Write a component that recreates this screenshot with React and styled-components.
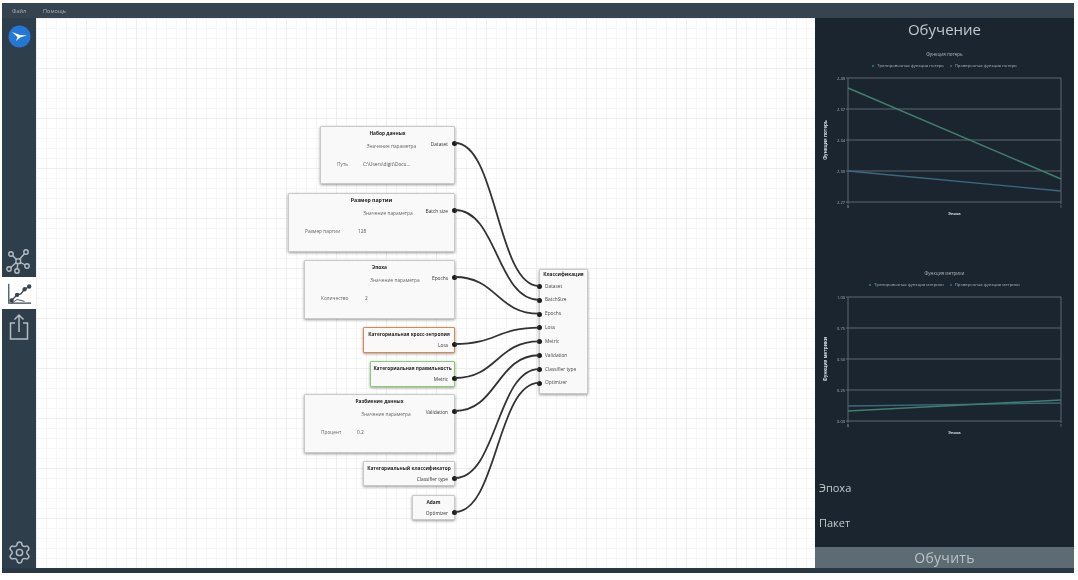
import styled, { createGlobalStyle } from "styled-components";
import { Settings } from "lucide-react";

const GlobalStyle = createGlobalStyle`
  html, body {
    margin: 0;
    padding: 0;
    background: #fff;
    overflow: hidden;
  }
  body {
    font-family: "Open Sans", "Liberation Sans", sans-serif;
  }
`;

const Page = styled.div`
  width: 1078px;
  height: 580px;
  padding: 3px 4px 7px 2px;
  box-sizing: border-box;
  filter: blur(0.6px);
`;

const Win = styled.div`
  height: 100%;
  display: flex;
  flex-direction: column;
  background: #2d3b47;
`;

const MenuBar = styled.div`
  height: 15px;
  flex: none;
  display: flex;
  align-items: center;
  gap: 17px;
  padding-left: 10px;
  background: #35444f;
  color: #a9b3ba;
  font-size: 5.5px;
`;

const Main = styled.div`
  flex: 1;
  min-height: 0;
  display: flex;
`;

const Sidebar = styled.div`
  width: 34px;
  flex: none;
  display: flex;
  flex-direction: column;
  align-items: stretch;
  background: #2f3e4b;
`;

const LogoWrap = styled.div`
  height: 36px;
  display: flex;
  justify-content: center;
  align-items: center;
`;

const NavGroup = styled.div`
  margin-top: 191px;
  display: flex;
  flex-direction: column;
`;

const NavItem = styled.div`
  height: ${(p) => p.$h}px;
  display: flex;
  align-items: center;
  justify-content: center;
  background: ${(p) => (p.$active ? "#fff" : "transparent")};
  color: ${(p) => (p.$active ? "#3a4650" : "#b3bcc2")};
`;

const GearWrap = styled.div`
  margin-top: auto;
  height: 32px;
  display: flex;
  align-items: center;
  justify-content: center;
  color: #b3bcc2;
`;

const Canvas = styled.div`
  flex: none;
  width: 779px;
  height: 550px;
  position: relative;
  overflow: hidden;
  background-color: #fff;
  background-image: linear-gradient(#eeeeee 1px, transparent 1px),
    linear-gradient(90deg, #eeeeee 1px, transparent 1px),
    linear-gradient(#f6f6f6 1px, transparent 1px),
    linear-gradient(90deg, #f6f6f6 1px, transparent 1px);
  background-size: 50px 50px, 50px 50px, 10px 10px, 10px 10px;
`;

const Wires = styled.svg`
  position: absolute;
  left: 0;
  top: 0;
  pointer-events: none;
`;

const Node = styled.div`
  position: absolute;
  left: ${(p) => p.$x}px;
  top: ${(p) => p.$y}px;
  width: ${(p) => p.$w}px;
  height: ${(p) => p.$h}px;
  box-sizing: border-box;
  background: #f9f9f9;
  border: 1px solid ${(p) => p.$border || "#c9c9c9"};
  box-shadow: 0 1px 3px rgba(0, 0, 0, 0.4);
  border-radius: 1px;
  display: flex;
  flex-direction: column;
  color: #555;
  font-size: 4.8px;
`;

const NodeTitle = styled.div`
  height: 13px;
  line-height: 13px;
  text-align: center;
  font-weight: 700;
  color: #222;
  font-size: ${(p) => p.$size || 4.8}px;
  white-space: nowrap;
`;

const PortRow = styled.div`
  height: 8px;
  line-height: 8px;
  display: flex;
  justify-content: flex-end;
  padding-right: 6px;
  white-space: nowrap;
  color: #333;
  position: relative;
`;

const Dot = styled.span`
  position: absolute;
  right: -3px;
  top: 1px;
  width: 5px;
  height: 5px;
  border-radius: 50%;
  background: #1c1c1c;
`;

const ParamHead = styled.div`
  margin-top: -6px;
  height: 8px;
  line-height: 8px;
  text-align: center;
  padding-left: ${(p) => p.$shift || 0}px;
  white-space: nowrap;
  color: #666;
`;

const ParamRow = styled.div`
  margin-top: 9px;
  height: 10px;
  line-height: 10px;
  display: flex;
  padding-left: ${(p) => p.$pad}px;
  white-space: nowrap;
  color: #666;
`;

const ParamName = styled.div`
  width: ${(p) => p.$w}px;
  flex: none;
`;

const ParamValue = styled.div`
  color: #555;
`;

const InputRow = styled.div`
  height: 13.85px;
  line-height: 13.85px;
  padding-left: 5px;
  color: #444;
  position: relative;
  white-space: nowrap;
`;

const InDot = styled.span`
  position: absolute;
  left: -3.5px;
  top: 4.4px;
  width: 5px;
  height: 5px;
  border-radius: 50%;
  background: #1c1c1c;
`;

const ReceiverTitle = styled(NodeTitle)`
  height: 9.5px;
  line-height: 9px;
`;

const Panel = styled.div`
  flex: 1;
  min-width: 0;
  display: flex;
  flex-direction: column;
  background: #1b2530;
`;

const Heading = styled.div`
  height: 24px;
  line-height: 23px;
  text-align: center;
  font-size: 15px;
  color: #c2c9cd;
  margin-bottom: 8px;
`;

const ChartBlock = styled.div`
  margin-bottom: ${(p) => p.$gap || 0}px;
`;

const ChartTitle = styled.div`
  height: 8px;
  line-height: 8px;
  text-align: center;
  font-size: 4.6px;
  color: #aeb6bb;
`;

const Legend = styled.div`
  margin-top: 4px;
  height: 8px;
  line-height: 8px;
  display: flex;
  justify-content: center;
  gap: 6px;
  font-size: 4.2px;
  color: #aeb6bb;
`;

const LegendItem = styled.span`
  &::before {
    content: "";
    display: inline-block;
    width: 2px;
    height: 2px;
    margin-right: 3px;
    vertical-align: middle;
    border-radius: 50%;
    background: ${(p) => p.$color};
  }
`;

const PlotSvg = styled.svg`
  display: block;
`;

const FieldLabel = styled.div`
  padding-left: 4px;
  font-size: 11px;
  height: 16px;
  line-height: 16px;
  color: #c3cace;
  margin-top: ${(p) => p.$top}px;
`;

const TrainButton = styled.div`
  margin-top: auto;
  height: 21px;
  line-height: 22px;
  text-align: center;
  font-size: 14px;
  letter-spacing: 0.3px;
  color: #bcc3c7;
  background: #5d6b75;
`;

const BottomStrip = styled.div`
  height: 5px;
  flex: none;
  background: #2a3843;
`;

function Logo() {
  return (
    <svg width="23" height="23" viewBox="0 0 23 23">
      <circle cx="11.5" cy="11.5" r="11" fill="#2477d2" />
      <path d="M4 7 L12 10 L19 10.5 L12.5 12.2 L8 16 L9.5 12 Z" fill="#fff" />
    </svg>
  );
}

function NetworkIcon() {
  const ends = [
    [20, 4],
    [5, 6],
    [3, 21],
    [11, 23],
    [21, 18],
  ];
  return (
    <svg width="26" height="26" viewBox="0 0 26 26" fill="none" stroke="currentColor" strokeWidth="1.4">
      {ends.map(([x, y], i) => (
        <g key={i}>
          <line x1="12" y1="13" x2={x} y2={y} />
          <circle cx={x} cy={y} r="2.2" fill="#2f3e4b" />
        </g>
      ))}
      <rect x="10" y="11" width="4.5" height="4.5" fill="#2f3e4b" />
    </svg>
  );
}

function ChartIcon() {
  return (
    <svg width="26" height="26" viewBox="0 0 28 28" fill="none" stroke="currentColor" strokeWidth="1.3">
      <path d="M3 4 V25 H27" />
      <path d="M6 22 L12 16 L16 15 L20 10 L25 7" strokeWidth="1.5" />
      <circle cx="6" cy="22" r="1.7" fill="currentColor" />
      <circle cx="12" cy="16" r="1.7" fill="currentColor" />
      <circle cx="20" cy="10" r="1.7" fill="currentColor" />
      <circle cx="25" cy="7" r="1.7" fill="currentColor" />
      <path d="M6 25 L12 21 L20 23" strokeWidth="1" />
    </svg>
  );
}

function ShareIcon() {
  return (
    <svg width="24" height="28" viewBox="0 0 24 28" fill="none" stroke="currentColor" strokeWidth="1.5">
      <path d="M8 10 H3.5 V26 H20.5 V10 H16" />
      <path d="M12 19 V2 M7.5 6.5 L12 2 L16.5 6.5" />
    </svg>
  );
}

const ports = [
  { x: 284, y: 108, w: 135, h: 58, title: "Набор данных", port: "Dataset", head: 8, pad: 16, nameW: 26, name: "Путь", value: "C:\\Users\\digit\\Docu...", to: 0 },
  { x: 252, y: 175, w: 167, h: 59, title: "Размер партии", size: 5.2, port: "Batch size", head: 33, pad: 16, nameW: 53, name: "Размер партии", value: "128", to: 1 },
  { x: 268, y: 242, w: 151, h: 59, title: "Эпоха", port: "Epochs", head: 31, pad: 16, nameW: 44, name: "Количество", value: "2", to: 2 },
  { x: 327, y: 309, w: 92, h: 26, title: "Категориальная кросс-энтропия", port: "Loss", border: "#d98a4a", to: 3 },
  { x: 334, y: 343, w: 85, h: 26, title: "Категориальная правильность", port: "Metric", border: "#86d06a", to: 4 },
  { x: 268, y: 376, w: 151, h: 59, title: "Разбиение данных", port: "Validation", head: 13, pad: 16, nameW: 36, name: "Процент", value: "0.2", to: 5 },
  { x: 327, y: 443, w: 92, h: 25, title: "Категориальный классификатор", port: "Classifier type", to: 6 },
  { x: 376, y: 477, w: 43, h: 25, title: "Adam", port: "Optimizer", to: 7 },
];

const inputs = ["Dataset", "BatchSize", "Epochs", "Loss", "Metric", "Validation", "Classifier type", "Optimizer"];
const startYs = [125, 192, 259, 326, 360, 393, 460, 494];
const endY = (i) => 268 + i * 13.85;

function wirePath(i, to) {
  const y1 = startYs[i];
  const y2 = endY(to);
  return `M419 ${y1} C461 ${y1} 461 ${y2} 503 ${y2}`;
}

function Plot({ ticks, green, blue, axis }) {
  const left = 33;
  const right = 246;
  const top = 8;
  const bottom = 132;
  const step = (bottom - top) / (ticks.length - 1);
  return (
    <PlotSvg width="259" height="150" viewBox="0 0 259 150" fontFamily="Open Sans, sans-serif">
      {ticks.map((t, i) => (
        <g key={t}>
          <line x1={left - 2} x2={right} y1={top + i * step} y2={top + i * step} stroke="#5c6872" strokeWidth="1" />
          <text x={left - 3} y={top + i * step + 1.5} textAnchor="end" fontSize="4" fill="#aeb6bb">{t}</text>
        </g>
      ))}
      <line x1={left} x2={left} y1={top} y2={bottom + 2} stroke="#5c6872" />
      <line x1={right} x2={right} y1={top} y2={bottom + 2} stroke="#5c6872" />
      <line x1={left} x2={right} y1={blue[0]} y2={blue[1]} stroke="#3b6a7f" strokeWidth="1.3" />
      <line x1={left} x2={right} y1={green[0]} y2={green[1]} stroke="#3f7f6d" strokeWidth="1.5" />
      <text x={left} y={bottom + 6} textAnchor="middle" fontSize="4" fill="#aeb6bb">0</text>
      <text x={right} y={bottom + 6} textAnchor="middle" fontSize="4" fill="#aeb6bb">1</text>
      <text x={(left + right) / 2} y={bottom + 13} textAnchor="middle" fontSize="4" fontWeight="700" fill="#d5dade">Эпоха</text>
      <text transform={`translate(12 ${(top + bottom) / 2}) rotate(-90)`} textAnchor="middle" fontSize="4.6" fontWeight="700" fill="#d5dade">{axis}</text>
    </PlotSvg>
  );
}

export default function App() {
  return (
    <Page>
      <GlobalStyle />
      <Win>
        <MenuBar>
          <span>Файл</span>
          <span>Помощь</span>
        </MenuBar>
        <Main>
          <Sidebar>
            <LogoWrap>
              <Logo />
            </LogoWrap>
            <NavGroup>
              <NavItem $h={32}>
                <NetworkIcon />
              </NavItem>
              <NavItem $h={32} $active>
                <ChartIcon />
              </NavItem>
              <NavItem $h={36}>
                <ShareIcon />
              </NavItem>
            </NavGroup>
            <GearWrap>
              <Settings size={25} strokeWidth={1.4} />
            </GearWrap>
          </Sidebar>
          <Canvas>
            {ports.map((n) => (
              <Node key={n.title} $x={n.x} $y={n.y} $w={n.w} $h={n.h} $border={n.border}>
                <NodeTitle $size={n.size}>{n.title}</NodeTitle>
                <PortRow>
                  {n.port}
                  <Dot />
                </PortRow>
                {n.name && <ParamHead $shift={n.head}>Значение параметра</ParamHead>}
                {n.name && (
                  <ParamRow $pad={n.pad}>
                    <ParamName $w={n.nameW}>{n.name}</ParamName>
                    <ParamValue>{n.value}</ParamValue>
                  </ParamRow>
                )}
              </Node>
            ))}
            <Node $x={503} $y={251} $w={49} $h={125}>
              <ReceiverTitle>Классификация</ReceiverTitle>
              {inputs.map((name) => (
                <InputRow key={name}>
                  {name}
                  <InDot />
                </InputRow>
              ))}
            </Node>
            <Wires width="779" height="550" fill="none" stroke="#333" strokeWidth="1.8">
              {ports.map((n, i) => (
                <path key={n.port} d={wirePath(i, n.to)} />
              ))}
            </Wires>
          </Canvas>
          <Panel>
            <Heading>Обучение</Heading>
            <ChartBlock $gap={49}>
              <ChartTitle>Функция потерь</ChartTitle>
              <Legend>
                <LegendItem $color="#3f7f6d">Тренировочная функция потерь</LegendItem>
                <LegendItem $color="#3b6a7f">Проверочная функция потерь</LegendItem>
              </Legend>
              <Plot ticks={["2.40", "2.37", "2.34", "2.30", "2.27"]} green={[18, 109]} blue={[101, 121]} axis="Функция потерь" />
            </ChartBlock>
            <ChartBlock>
              <ChartTitle>Функция метрики</ChartTitle>
              <Legend>
                <LegendItem $color="#3f7f6d">Тренировочная функция метрики</LegendItem>
                <LegendItem $color="#3b6a7f">Проверочная функция метрики</LegendItem>
              </Legend>
              <Plot ticks={["1.00", "0.75", "0.50", "0.25", "0.00"]} green={[122, 111]} blue={[117, 114]} axis="Функция метрики" />
            </ChartBlock>
            <FieldLabel $top={41}>Эпоха</FieldLabel>
            <FieldLabel $top={19}>Пакет</FieldLabel>
            <TrainButton>Обучить</TrainButton>
          </Panel>
        </Main>
        <BottomStrip />
      </Win>
    </Page>
  );
}
